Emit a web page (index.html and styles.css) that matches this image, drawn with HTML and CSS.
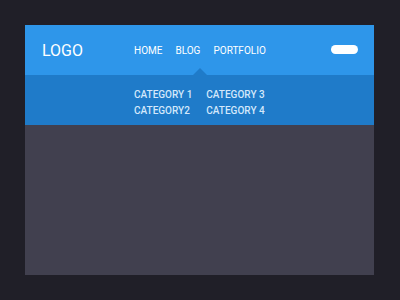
FILE: index.html
```html
<!DOCTYPE html>
<html lang="en">
<head>
    <meta charset="UTF-8">
    <meta name="viewport" content="width=device-width, initial-scale=1.0">
    <title>Dropdown Menu</title>
    <link rel="stylesheet" href="styles.css">
</head>
<body>

<div class="frame">
    <div class="header">
        <div class="logo">LOGO</div>
        <ul class="nav">
            <li>HOME</li>
            <li>BLOG</li>
            <li>PORTFOLIO</li>
        </ul>
        <div class="toggle"></div>
    </div>
    <div class="submenu">
        <ul class="sub-col">
            <li>CATEGORY 1</li>
            <li>CATEGORY2</li>
        </ul>
        <ul class="sub-col">
            <li>CATEGORY 3</li>
            <li>CATEGORY 4</li>
        </ul>
    </div>
    <div class="content"></div>
</div>

</body>
</html>
```
FILE: styles.css
```css
body {
    margin: 0;
    padding: 25px;
    background-color: #201f28;
    font-family: Roboto, "Liberation Sans", sans-serif;
}

ul {
    list-style: none;
    margin: 0;
    padding: 0;
}

.frame {
    width: 349px;
    height: 250px;
    display: flex;
    flex-direction: column;
}

.header {
    height: 50px;
    background-color: #2e96ea;
    display: flex;
    align-items: stretch;
    padding-left: 17px;
    padding-right: 16px;
}

.logo {
    color: #fff;
    font-size: 16px;
    display: flex;
    align-items: center;
    width: 92px;
}

.nav {
    position: relative;
    display: flex;
    align-items: center;
    gap: 13px;
    color: #fff;
    font-size: 10px;
}

/* little arrow pointing at the open dropdown */
.nav::after {
    content: "";
    position: absolute;
    bottom: 0;
    left: 50%;
    margin-left: -7px;
    border-left: 7px solid transparent;
    border-right: 7px solid transparent;
    border-bottom: 7px solid #1f7bc9;
}

.toggle {
    margin-left: auto;
    align-self: center;
    width: 27px;
    height: 9px;
    border-radius: 5px;
    background-color: #fff;
    margin-top: -1px;
}

.submenu {
    height: 50px;
    background-color: #1f7bc9;
    display: flex;
    gap: 14px;
    padding-left: 109px;
    padding-top: 12px;
    box-sizing: border-box;
    color: #d3e8fb;
    font-size: 10px;
    font-weight: 500;
}

.sub-col li {
    line-height: 16px;
}

.content {
    flex: 1;
    background-color: #41404f;
}
```
